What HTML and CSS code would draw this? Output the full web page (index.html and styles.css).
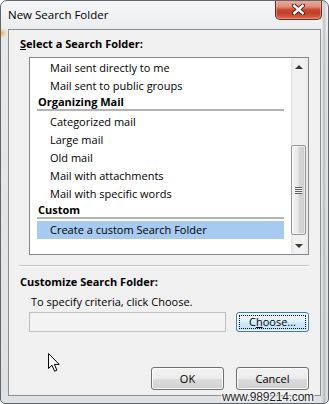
FILE: index.html
```html
<!DOCTYPE html>
<html lang="en">
<head>
<meta charset="utf-8">
<title>New Search Folder</title>
<link rel="stylesheet" href="styles.css">
</head>
<body>
<div class="window">
  <div class="titlebar">
    <span class="title">New Search Folder</span>
    <button class="close" aria-label="Close">
      <svg width="13" height="11" viewBox="0 0 13 11">
        <path d="M2,1.5 L11,9.5 M11,1.5 L2,9.5" stroke="#4a1d14" stroke-width="4.2" stroke-linecap="square" fill="none"/>
        <path d="M2.3,1.8 L10.7,9.2 M10.7,1.8 L2.3,9.2" stroke="#ffffff" stroke-width="2.4" stroke-linecap="square" fill="none"/>
      </svg>
    </button>
  </div>
  <div class="client">
    <div class="label"><u>S</u>elect a Search Folder:</div>
    <div class="listbox">
      <div class="items">
        <div class="item">Mail sent directly to me</div>
        <div class="item">Mail sent to public groups</div>
        <div class="group">Organizing Mail</div>
        <div class="item">Categorized mail</div>
        <div class="item">Large mail</div>
        <div class="item">Old mail</div>
        <div class="item">Mail with attachments</div>
        <div class="item">Mail with specific words</div>
        <div class="group">Custom</div>
        <div class="item selected">Create a custom Search Folder</div>
      </div>
      <div class="scrollbar">
        <div class="arrow"><span class="tri-up"></span></div>
        <div class="thumb"><span class="grip"></span></div>
        <div class="arrow"><span class="tri-down"></span></div>
      </div>
    </div>
    <div class="separator"></div>
    <div class="label customize">Customize Search Folder:</div>
    <div class="hint">To specify criteria, click Choose.</div>
    <div class="criteria">
      <div class="textbox"></div>
      <button class="btn focused">C<u>h</u>oose...</button>
    </div>
    <div class="actions">
      <button class="btn">OK</button>
      <button class="btn">Cancel</button>
    </div>
  </div>
  <svg class="cursor" width="13" height="20" viewBox="0 0 13 20">
    <path d="M0.5,0.5 L0.5,15.5 L4,12.2 L6.6,18.2 L8.9,17.2 L6.4,11.4 L11.2,11.4 Z" fill="#ffffff" stroke="#000000" stroke-width="1" stroke-linejoin="miter"/>
  </svg>
  <div class="watermark">www.989214.com</div>
</div>
</body>
</html>
```

FILE: styles.css
```css
* {
  box-sizing: border-box;
}

html,
body {
  margin: 0;
  background: #ffffff;
}

body {
  font-family: "Open Sans", "Noto Sans", sans-serif;
  font-size: 11px;
  color: #000000;
}

button {
  font-family: inherit;
  font-size: inherit;
  color: inherit;
  padding: 0;
  margin: 0;
}

.window {
  position: relative;
  width: 329px;
  height: 404px;
  border: 1px solid #62666b;
  border-radius: 7px 7px 5px 5px;
  padding: 0 7px 7px;
  display: flex;
  flex-direction: column;
  overflow: hidden;
  background:
    linear-gradient(to right, rgba(0, 0, 0, 0) 321px, rgba(80, 80, 80, 0.28) 323px, rgba(80, 80, 80, 0.08) 325px, rgba(0, 0, 0, 0) 327px),
    radial-gradient(circle at 1px 32px, rgba(240, 170, 70, 0.85) 0, rgba(240, 170, 70, 0) 5px),
    linear-gradient(#f5f6f7, #e6e9ec 40px, #dfe2e5);
}

.titlebar {
  height: 28px;
  display: flex;
  align-items: flex-start;
}

.title {
  font-size: 11.5px;
  line-height: 28px;
}

.close {
  margin: -1px -1px 0 auto;
  width: 47px;
  height: 20px;
  border: 1px solid #6a2a1e;
  border-top: none;
  border-radius: 0 0 5px 5px;
  background: linear-gradient(#eab0a2 0%, #df8e7b 35%, #c9472f 52%, #c2402a 70%, #dc6c52 100%);
  box-shadow: inset 0 0 0 1px rgba(255, 220, 210, 0.35);
  display: flex;
  align-items: center;
  justify-content: center;
}

.close svg {
  display: block;
}

.client {
  flex: 1;
  border: 1px solid #8c8e91;
  background: #f0f0f0;
  padding: 6px 11px 5px 11px;
  display: flex;
  flex-direction: column;
}

.label {
  font-weight: 700;
  line-height: 16px;
}

.listbox {
  margin: 5px 0 0 9px;
  height: 198px;
  border: 1px solid #828790;
  background: #ffffff;
  display: flex;
}

.items {
  flex: 1;
  padding: 1px 7px 0;
  overflow: hidden;
}

.item {
  height: 18px;
  line-height: 18px;
  padding-left: 13px;
  white-space: nowrap;
}

.group {
  height: 16px;
  line-height: 14px;
  margin-bottom: 2px;
  padding-left: 1px;
  font-weight: 700;
  border-bottom: 2px solid #b3b3b3;
}

.selected {
  background: #a7cbf0;
}

.scrollbar {
  width: 17px;
  display: flex;
  flex-direction: column;
  background: linear-gradient(to right, #e4e4e4, #f1f1f1 3px, #f1f1f1 13px, #e9e9e9);
}

.arrow {
  height: 17px;
  display: flex;
  align-items: center;
  justify-content: center;
  padding-right: 1px;
}

.tri-up {
  width: 0;
  height: 0;
  border-left: 4px solid transparent;
  border-right: 4px solid transparent;
  border-bottom: 4px solid #3a3a3a;
}

.tri-down {
  width: 0;
  height: 0;
  border-left: 4px solid transparent;
  border-right: 4px solid transparent;
  border-top: 4px solid #3a3a3a;
}

.thumb {
  height: 90px;
  margin: auto 2px 2px 0;
  border: 1px solid #989898;
  border-radius: 2px;
  background: linear-gradient(to right, #f5f5f5, #e8e8e8 45%, #d6d6d6 55%, #cdcdcd);
  box-shadow: inset 0 0 0 1px rgba(255, 255, 255, 0.6);
  display: flex;
  align-items: center;
  justify-content: center;
}

.grip {
  width: 7px;
  height: 7px;
  background: repeating-linear-gradient(#5e5e5e 0, #5e5e5e 1px, #f4f4f4 1px, #f4f4f4 2px);
}

.separator {
  margin: 10px 0 0 -1px;
  height: 2px;
  border-top: 1px solid #c7c7c7;
  border-bottom: 1px solid #ffffff;
}

.customize {
  margin-top: 7px;
}

.hint {
  margin-top: 4px;
  padding-left: 11px;
  line-height: 16px;
}

.criteria {
  margin: 2px 0 0 9px;
  height: 20px;
  display: flex;
  gap: 10px;
}

.textbox {
  flex: 1;
  border: 1px solid #bdbfc2;
  background: #f3f3f3;
}

.btn {
  position: relative;
  width: 73px;
  height: 23px;
  border: 1px solid #707070;
  border-radius: 3px;
  background: linear-gradient(#f2f2f2 0%, #ebebeb 50%, #dddddd 51%, #cfcfcf 100%);
  box-shadow: inset 0 0 0 1px #fbfbfb;
  line-height: 19px;
  text-align: center;
}

.criteria .btn {
  height: 20px;
  line-height: 16px;
}

.btn.focused {
  border-color: #3c7fb1;
  background: linear-gradient(#edf7fd 0%, #dff1fc 50%, #cdebfd 51%, #bfe2f7 100%);
  box-shadow: inset 0 0 0 1px #f4fbff;
}

.btn.focused::after {
  content: "";
  position: absolute;
  inset: 2px;
  border: 1px dotted #000000;
  border-radius: 1px;
}

.actions {
  margin-top: auto;
  display: flex;
  justify-content: flex-end;
  gap: 12px;
}

.cursor {
  position: absolute;
  left: 47px;
  top: 352px;
}

.watermark {
  position: absolute;
  left: 221px;
  top: 389px;
  font-family: "Liberation Sans", Arial, sans-serif;
  font-size: 12px;
  line-height: 14px;
  color: #1e1e1e;
  text-shadow: 0 0 1px #ffffff, 0 0 2px #ffffff, 1px 0 1px #ffffff, -1px 0 1px #ffffff;
  letter-spacing: -0.2px;
}
```
